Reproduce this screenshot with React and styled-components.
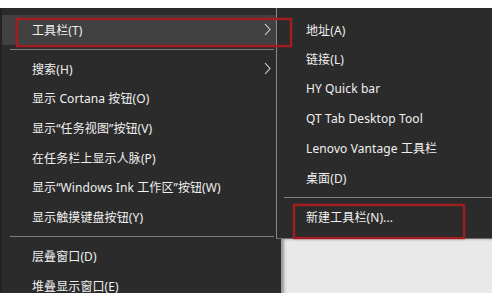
import React from "react";
import styled, { createGlobalStyle } from "styled-components";

const GlobalStyle = createGlobalStyle`
  html, body { margin: 0; padding: 0; background: #ffffff; }
  body { font-family: "Segoe UI", "Noto Sans", "Noto Sans CJK SC", sans-serif; }
`;

const Stage = styled.div`
  position: relative;
  width: 492px;
  height: 293px;
  overflow: hidden;
  padding-top: 8px;
  box-sizing: border-box;
  background: #ffffff;
  display: flex;
  align-items: flex-start;
`;

const Menu = styled.div`
  width: 281px;
  flex: none;
  background: #2b2b2b;
  border-left: 2px solid #232323;
  box-sizing: border-box;
  padding: 7px 0 8px;
  display: flex;
  flex-direction: column;
  min-height: 300px;
`;

const Item = styled.div`
  height: 29.6px;
  display: flex;
  align-items: center;
  justify-content: space-between;
  padding: 0 10px 0 ${(p) => p.$indent}px;
  background: ${(p) => (p.$active ? "#414141" : "transparent")};
  color: #f0f0f0;
  font-size: 12px;
  letter-spacing: 0.1px;
  white-space: nowrap;
`;

const Separator = styled.div`
  height: 1px;
  background: #7e7e7e;
  margin: 4px ${(p) => p.$right}px 4.5px ${(p) => p.$left}px;
  flex: none;
`;

const Side = styled.div`
  flex: 1;
  margin-left: -5px;
  display: flex;
  flex-direction: column;
  position: relative;
  z-index: 1;
`;

const SubMenu = styled.div`
  position: relative;
  background: #2b2b2b;
  border-left: 1px solid #8a8a8a;
  border-bottom: 1px solid #6e6e6e;
  padding: 7px 0 6px;
  display: flex;
  flex-direction: column;
`;

const Backdrop = styled.div`
  margin-left: 5px;
  height: 80px;
  background: #e9e9e9;
  box-shadow: inset 3px 0 3px rgba(0, 0, 0, 0.35);
`;

const Mark = styled.div`
  position: absolute;
  left: ${(p) => p.$x}px;
  top: ${(p) => p.$y}px;
  width: ${(p) => p.$w}px;
  height: ${(p) => p.$h}px;
  box-sizing: border-box;
  border: 2px solid #a11d1f;
  box-shadow: 0 0 2px rgba(170, 30, 30, 0.7), inset 0 0 2px rgba(170, 30, 30, 0.5);
  pointer-events: none;
  z-index: 5;
`;

const Chevron = () => (
  <svg width="7" height="13" viewBox="0 0 7 13" fill="none">
    <polyline points="1,1 6,6.5 1,12" stroke="#d8d8d8" strokeWidth="1.1" />
  </svg>
);

const mainTop = [{ label: "工具栏(T)", arrow: true, active: true }];
const mainMid = [
  { label: "搜索(H)", arrow: true },
  { label: "显示 Cortana 按钮(O)" },
  { label: "显示“任务视图”按钮(V)" },
  { label: "在任务栏上显示人脉(P)" },
  { label: "显示“Windows Ink 工作区”按钮(W)" },
  { label: "显示触摸键盘按钮(Y)" },
];
const mainBottom = [{ label: "层叠窗口(D)" }, { label: "堆叠显示窗口(E)" }];

const subItems = [
  "地址(A)",
  "链接(L)",
  "HY Quick bar",
  "QT Tab Desktop Tool",
  "Lenovo Vantage 工具栏",
  "桌面(D)",
];

const renderMain = (list) =>
  list.map((it) => (
    <Item key={it.label} $indent={30} $active={it.active}>
      <span>{it.label}</span>
      {it.arrow && <Chevron />}
    </Item>
  ));

export default function App() {
  return (
    <>
      <GlobalStyle />
      <Stage>
        <Menu>
          {renderMain(mainTop)}
          <Separator $left={8} $right={7} />
          {renderMain(mainMid)}
          <Separator $left={8} $right={7} />
          {renderMain(mainBottom)}
        </Menu>
        <Side>
          <SubMenu>
            {subItems.map((s) => (
              <Item key={s} $indent={29}>
                <span>{s}</span>
              </Item>
            ))}
            <Separator $left={7} $right={0} />
            <Item $indent={29}>
              <span>新建工具栏(N)...</span>
            </Item>
            <Mark $x={16} $y={196} $w={172} $h={35} />
          </SubMenu>
          <Backdrop />
        </Side>
        <Mark $x={16} $y={18} $w={276} $h={29} />
      </Stage>
    </>
  );
}
